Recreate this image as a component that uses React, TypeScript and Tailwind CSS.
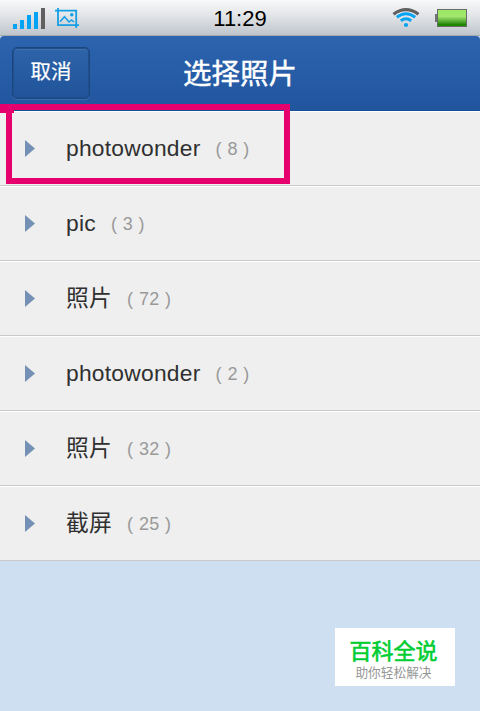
export default function App() {
  const albums = [
    { id: 1, name: "photowonder", count: 8 },
    { id: 2, name: "pic", count: 3 },
    { id: 3, name: "照片", count: 72 },
    { id: 4, name: "photowonder", count: 2 },
    { id: 5, name: "照片", count: 32 },
    { id: 6, name: "截屏", count: 25 },
  ];

  return (
    <div className="relative flex h-[711px] w-[480px] flex-col overflow-hidden bg-[#cddff0] font-['Liberation_Sans','Noto_Sans_CJK_SC',sans-serif]">

      {/* Status Bar */}
      <div className="grid h-9 grid-cols-3 items-center border-b border-[#a5abb1] bg-linear-to-b from-[#f8f9fa] via-[#dfe2e5] to-[#bfc5cc]">
        <div className="flex items-center pt-0.5 pl-[13px]">
          <svg width="66" height="22" viewBox="0 0 66 22" fill="none">
            <path d="M0 16h4v5H0zM7 12h4v9H7zM14 7h4v14h-4zM21 4h4v17h-4z" fill="#05a3f3" />
            <path d="M28 0h4v21h-4z" fill="#606060" />
            <path d="M42 2.7h21.2V20M45 0v17.2h21" stroke="#159fe5" strokeWidth="1.8" />
            <path d="m47 13.7 4.5-5 4.5 5.3 2.5-2 2.5 2" stroke="#159fe5" strokeWidth="1.6" />
            <circle cx="58.8" cy="6.8" r="1.8" fill="#159fe5" />
          </svg>
        </div>
        <span className="pt-0.5 text-center text-[22px] leading-8 text-black">11:29</span>
        <div className="flex items-center justify-end gap-[15px] pr-[13px]">
          <svg width="28" height="20" viewBox="0 0 28 20" fill="none">
            <path d="M1.5 6.2Q14-2.8 26.5 6.2" stroke="#606060" strokeWidth="3.2" />
            <path d="M4.8 9.2q9.2-7 18.4 0M8.8 12.8q5.2-4 10.4 0" stroke="#05a3f3" strokeWidth="3" />
            <circle cx="14" cy="17" r="2.1" fill="#05a3f3" />
          </svg>
          <div className="flex items-center">
            <div className="h-2 w-0.5 bg-[#737373]" />
            <div className="h-[18px] w-[30px] border border-[#686b66] bg-linear-to-b from-[#9be965] from-10% via-[#a3e76e] via-40% to-[#1e8800] to-90%" />
          </div>
        </div>
      </div>

      {/* Title Bar */}
      <header className="grid h-[75px] grid-cols-[90px_1fr_90px] items-center rounded-t-sm border-b border-[#174f94] bg-linear-to-b from-[#2d64af] to-[#21559e] text-white">
        <button className="ml-3 h-[52px] w-[78px] rounded-[5px] border-[1.5px] border-[#1b4780] bg-linear-to-b from-[#2e64a9] to-[#20539a] pb-0.5 text-[20.5px] shadow-[0_1px_0_#3c6cae,inset_0_0_0_1px_#214f8c,inset_0_2px_0_#4270ae] [-webkit-text-stroke:0.2px]">
          取消
        </button>
        <h1 className="pt-0.5 text-center text-[28.5px] leading-10 [-webkit-text-stroke:0.4px]">选择照片</h1>
      </header>

      {/* Album List */}
      <ul>
        {albums.map((album) => (
          <li
            key={album.id}
            className="flex h-[75px] items-center border-t border-b border-t-white border-b-[#c9c9c9] bg-[#efefef] pl-[25px]"
          >
            <svg width="10" height="17" viewBox="0 0 10 17" className="mr-[31px]">
              <path d="M0 0v17l10-8.5z" fill="#7590b5" />
            </svg>
            <span className="pb-0.5 text-[22.8px] leading-8 tracking-[0.25px] text-[#303030]">{album.name}</span>
            <span className="ml-[15px] text-lg leading-7 tracking-[0.4px] text-[#999]">( {album.count} )</span>
          </li>
        ))}
      </ul>

      {/* Highlight around the first album */}
      <div className="absolute top-[104px] left-[6px] h-20 w-[284px] border-6 border-[#e6006e]" />
      <div className="absolute top-[104px] left-0 h-[9px] w-3.5 bg-[#e6006e]" />

      {/* Corner Badge */}
      <div className="absolute top-[628px] left-[335px] flex h-[58px] w-[120px] flex-col items-center bg-white pt-[11px] pr-[3px]">
        <p className="text-[22px] leading-[26px] text-[#00cd32] [-webkit-text-stroke:0.6px]">百科全说</p>
        <p className="text-[12.7px] leading-4 text-[#969696]">助你轻松解决</p>
      </div>
    </div>
  );
}
